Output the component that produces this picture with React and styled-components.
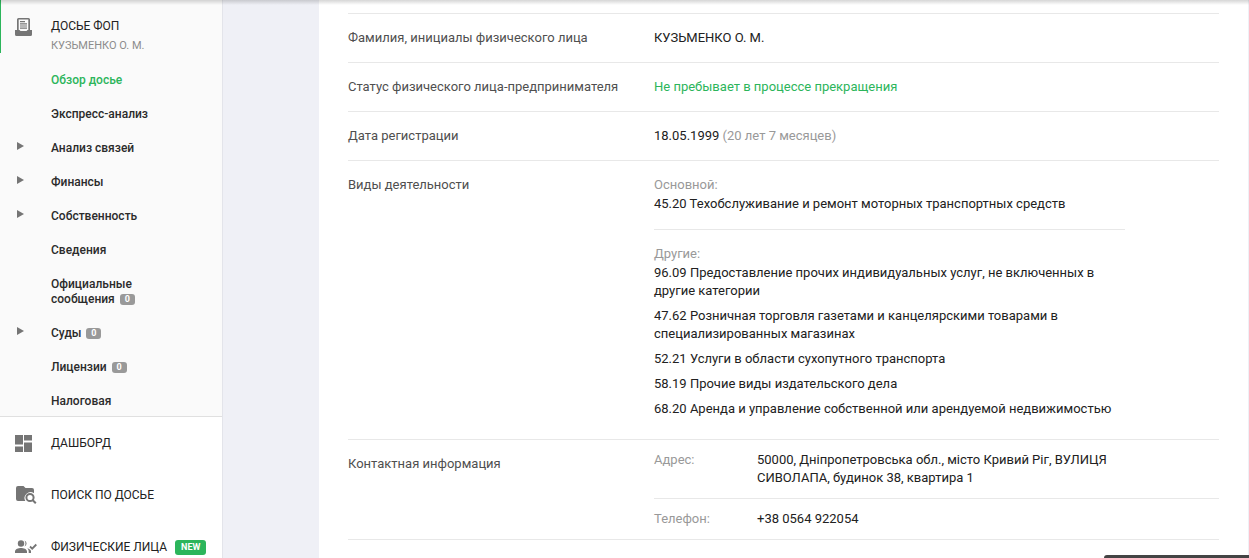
import React from "react";
import styled, { createGlobalStyle } from "styled-components";

const GlobalStyle = createGlobalStyle`
  * {
    box-sizing: border-box;
  }

  body {
    margin: 0;
    background-color: #eff0f6;
    color: #212121;
    font-family: Roboto, "Liberation Sans", sans-serif;
    font-size: 13px;
    line-height: 18px;
  }

  ul, dl, dd {
    margin: 0;
    padding: 0;
    list-style: none;
  }

  a {
    color: inherit;
    text-decoration: none;
  }
`;

const Layout = styled.div`
  position: relative;
  display: flex;
  height: 100vh;
  overflow: hidden;
`;

const HeaderShadow = styled.div`
  position: absolute;
  top: 0;
  left: 0;
  right: 0;
  height: 5px;
  background: linear-gradient(rgba(0, 0, 0, 0.16), rgba(0, 0, 0, 0));
`;

const Sidebar = styled.aside`
  flex: 0 0 223px;
  border-right: 1px solid #e3e4ea;
  background-color: #fff;
`;

const Dossier = styled.section`
  background-color: #fafafa;
  border-bottom: 1px solid #e0e0e0;
`;

const DossierHead = styled.a`
  display: flex;
  height: 53px;
  padding: 17px 0 0 14px;
  border-left: 1px solid #2cb55b;
`;

const IconBox = styled.span`
  display: flex;
  flex: 0 0 36px;
  color: #757575;
`;

const DossierTitle = styled.div`
  font-size: 12px;
`;

const DossierName = styled.div`
  font-size: 11px;
  line-height: 21px;
  color: #8c8c8c;
`;

const SubMenu = styled.ul`
  display: flex;
  flex-direction: column;
  gap: 19px;
  padding: 20px 0 7px 16px;
`;

const SubMenuItem = styled.li`
  display: flex;
  font-size: 12px;
  font-weight: 500;
  line-height: 15px;
`;

const Arrow = styled.span`
  flex: 0 0 35px;
  padding-top: 1px;

  &::before {
    content: "";
    display: ${(props) => (props.$visible ? "block" : "none")};
    width: 0;
    border-left: 7px solid #757575;
    border-top: 4px solid transparent;
    border-bottom: 4px solid transparent;
    margin-left: 1px;
  }
`;

const SubMenuLink = styled.a`
  max-width: 120px;
  color: ${(props) => (props.$active ? "#2cb55b" : "#2b2b2b")};
`;

const Count = styled.span`
  display: inline-block;
  width: 15px;
  margin-left: 5px;
  border-radius: 3px;
  background-color: #999;
  color: #fff;
  font-size: 9px;
  font-weight: 700;
  line-height: 11px;
  text-align: center;
  vertical-align: middle;
`;

const NavLink = styled.a`
  display: flex;
  align-items: center;
  height: 52px;
  padding-left: 15px;
  font-size: 12px;
  white-space: nowrap;
`;

const NewBadge = styled.span`
  margin-left: 8px;
  padding: 0 6px;
  border-radius: 3px;
  background-color: #2cb55b;
  color: #fff;
  font-size: 9px;
  font-weight: 700;
  line-height: 15px;
`;

const Content = styled.main`
  flex: 1;
  margin: 0 1px 0 96px;
  padding: 13px 29px 0;
  background-color: #fff;
`;

const Details = styled.dl`
  border-top: 1px solid #e8e8e8;
`;

const Row = styled.div`
  display: grid;
  grid-template-columns: 306px 1fr;
  border-bottom: 1px solid #e8e8e8;
`;

const Label = styled.dt`
  padding: 15px 0;
  color: #4f4f4f;
`;

const Value = styled.dd`
  padding: 15px 0;
  color: ${(props) => (props.$green ? "#2cb55b" : "#212121")};
`;

const Muted = styled.span`
  color: #999;
`;

const Activities = styled.dd`
  max-width: 471px;
  padding-bottom: 21px;
`;

const ActivityGroup = styled.div`
  padding-top: 15px;

  & + & {
    margin-top: 16px;
    border-top: 1px solid #e8e8e8;
  }
`;

const GroupTitle = styled.div`
  margin-bottom: 1px;
  color: #999;
`;

const ActivityList = styled.ul`
  display: flex;
  flex-direction: column;
  gap: 7px;
`;

const Contact = styled.dl`
  display: grid;
  grid-template-columns: 103px minmax(0, 370px);
  padding: 11px 0;

  & + & {
    border-top: 1px solid #e8e8e8;
  }
`;

const ContactLabel = styled.dt`
  color: #999;
`;

const ChatWidget = styled.div`
  position: absolute;
  right: 0;
  bottom: 0;
  width: 145px;
  height: 3px;
  border-top-left-radius: 3px;
  background-color: #444;
`;

const DossierIcon = () => (
  <svg width="17" height="20" viewBox="0 0 17 20" fill="currentColor">
    <path
      fillRule="evenodd"
      d="M3.500 1h10q1.500 0 1.500 1.500V14H2V2.500Q2 1 3.500 1zM3.700 2.600V14h9.600V2.600z"
    />
    <path d="M5 4h5v1.200H5zM5 6.200h7v1.200H5zM5 8.400h7v1.200H5zM5 10.600h7v1.200H5z" />
    <path d="M0 13h4.500l1 1h6l1-1H17v4.500q0 1.500-1.500 1.500h-14Q0 19 0 17.500z" />
  </svg>
);

const DashboardIcon = () => (
  <svg width="17" height="17" viewBox="0 0 17 17" fill="currentColor">
    <path d="M0 0h8v9.500H0zM9 0h8v5.500H9zM0 11.500h8V17H0zM9 7.500h8V17H9z" />
  </svg>
);

const FolderSearchIcon = () => (
  <svg width="22" height="18" viewBox="0 0 22 18" fill="currentColor">
    <path d="M3 0h5.500l2 2H17q2 0 2 2v3.200A6 6 0 0 0 10.300 15H3q-2 0-2-2V2q0-2 2-2z" />
    <circle cx="15" cy="11.500" r="3.600" fill="none" stroke="currentColor" strokeWidth="2" />
    <path d="M17.500 14l3.300 3.300" stroke="currentColor" strokeWidth="2" />
  </svg>
);

const PeopleIcon = () => (
  <svg width="22" height="14" viewBox="0 0 22 14" fill="currentColor">
    <circle cx="6" cy="3.500" r="3.200" />
    <path d="M9.500.5a3.200 3.200 0 0 1 0 6 5.500 5.500 0 0 0 0-6z" />
    <path d="M0 11.500C0 9 3.500 8 6 8s6 1 6 3.500V13H0zM12.300 8.300c2 .5 3.700 1.500 3.700 3.200V13h-2.300v-1.500c0-1.300-.5-2.400-1.400-3.200z" />
    <path d="M15 6.500l2.200 2.200L21.300 4.500" fill="none" stroke="currentColor" strokeWidth="1.800" />
  </svg>
);

const subMenu = [
  { title: "Обзор досье", active: true },
  { title: "Экспресс-анализ" },
  { title: "Анализ связей", nested: true },
  { title: "Финансы", nested: true },
  { title: "Собственность", nested: true },
  { title: "Сведения" },
  { title: "Официальные сообщения", count: 0 },
  { title: "Суды", nested: true, count: 0 },
  { title: "Лицензии", count: 0 },
  { title: "Налоговая" },
];

const navigation = [
  { title: "ДАШБОРД", icon: <DashboardIcon /> },
  { title: "ПОИСК ПО ДОСЬЕ", icon: <FolderSearchIcon /> },
  { title: "ФИЗИЧЕСКИЕ ЛИЦА", icon: <PeopleIcon />, isNew: true },
];

const otherActivities = [
  "96.09 Предоставление прочих индивидуальных услуг, не включенных в другие категории",
  "47.62 Розничная торговля газетами и канцелярскими товарами в специализированных магазинах",
  "52.21 Услуги в области сухопутного транспорта",
  "58.19 Прочие виды издательского дела",
  "68.20 Аренда и управление собственной или арендуемой недвижимостью",
];

const App = () => {
  return (
    <Layout>
      <GlobalStyle />
      <Sidebar>
        <Dossier>
          <DossierHead href="#dossier">
            <IconBox>
              <DossierIcon />
            </IconBox>
            <div>
              <DossierTitle>ДОСЬЕ ФОП</DossierTitle>
              <DossierName>КУЗЬМЕНКО О. М.</DossierName>
            </div>
          </DossierHead>
          <SubMenu>
            {subMenu.map((item) => (
              <SubMenuItem key={item.title}>
                <Arrow $visible={item.nested} />
                <SubMenuLink href="#section" $active={item.active}>
                  {item.title}
                  {item.count !== undefined && <Count>{item.count}</Count>}
                </SubMenuLink>
              </SubMenuItem>
            ))}
          </SubMenu>
        </Dossier>
        <nav>
          {navigation.map((item) => (
            <NavLink key={item.title} href="#page">
              <IconBox>{item.icon}</IconBox>
              {item.title}
              {item.isNew && <NewBadge>NEW</NewBadge>}
            </NavLink>
          ))}
        </nav>
      </Sidebar>

      <Content>
        <Details>
          <Row>
            <Label>Фамилия, инициалы физического лица</Label>
            <Value>КУЗЬМЕНКО О. М.</Value>
          </Row>
          <Row>
            <Label>Статус физического лица-предпринимателя</Label>
            <Value $green>Не пребывает в процессе прекращения</Value>
          </Row>
          <Row>
            <Label>Дата регистрации</Label>
            <Value>
              18.05.1999 <Muted>(20 лет 7 месяцев)</Muted>
            </Value>
          </Row>
          <Row>
            <Label>Виды деятельности</Label>
            <Activities>
              <ActivityGroup>
                <GroupTitle>Основной:</GroupTitle>
                <div>45.20 Техобслуживание и ремонт моторных транспортных средств</div>
              </ActivityGroup>
              <ActivityGroup>
                <GroupTitle>Другие:</GroupTitle>
                <ActivityList>
                  {otherActivities.map((activity) => (
                    <li key={activity}>{activity}</li>
                  ))}
                </ActivityList>
              </ActivityGroup>
            </Activities>
          </Row>
          <Row>
            <Label>Контактная информация</Label>
            <dd>
              <Contact>
                <ContactLabel>Адрес:</ContactLabel>
                <dd>
                  50000, Дніпропетровська обл., місто Кривий Ріг, ВУЛИЦЯ СИВОЛАПА, будинок 38,
                  квартира 1
                </dd>
              </Contact>
              <Contact>
                <ContactLabel>Телефон:</ContactLabel>
                <dd>+38 0564 922054</dd>
              </Contact>
            </dd>
          </Row>
        </Details>
      </Content>

      <HeaderShadow />
      <ChatWidget />
    </Layout>
  );
};

export default App;
